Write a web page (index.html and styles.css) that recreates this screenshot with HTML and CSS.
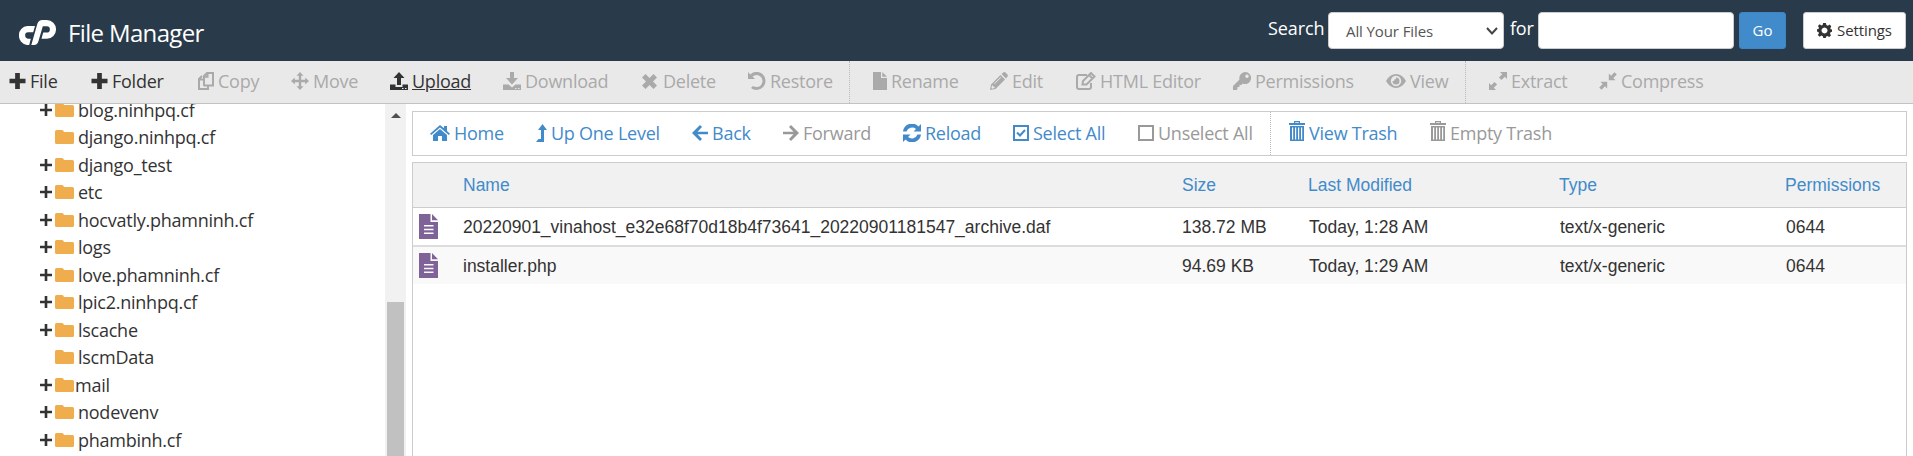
FILE: index.html
```html
<!DOCTYPE html>
<html lang="en">
<head>
<meta charset="utf-8">
<title>File Manager</title>
<link rel="stylesheet" href="styles.css">
</head>
<body>
<svg class="sprite" aria-hidden="true">
  <symbol id="plus" viewBox="0 0 17 17"><path d="M6 0h5v6h6v5h-6v6H6v-6H0V6h6z"/></symbol>
  <symbol id="plus-thin" viewBox="0 0 12 12"><path d="M4.700 0h2.600v4.700H12v2.600H7.300V12H4.700V7.300H0V4.700h4.700z"/></symbol>
  <symbol id="copy" viewBox="0 0 16 18"><path class="line" d="M10 14v3H1V7l3-3M6 14V4l3-3h6v12.500H6M6 4.800h3.500V1M1 7.500h4"/></symbol>
  <symbol id="move" viewBox="0 0 18 18"><path d="M9 0l3.500 3.800h-2.300v4h4V5.500L18 9l-3.800 3.500v-2.300h-4v4h2.300L9 18l-3.500-3.800h2.300v-4h-4v2.300L0 9l3.800-3.500v2.300h4v-4H5.500z"/></symbol>
  <symbol id="upload" viewBox="0 0 18 18"><path d="M9 0l5.500 6H11v7H7V6H3.500zM0 12.500h5.500V15h7v-2.500H18V18H0zm12 3.500v1h1.500v-1zm3 0v1h1.500v-1z" fill-rule="evenodd"/></symbol>
  <symbol id="download" viewBox="0 0 18 18"><path d="M7 0h4v6h4l-6 6.500L3 6h4zM0 12.500h5.500L9 15.500l3.500-3H18V18H0zm12 3.500v1h1.500v-1zm3 0v1h1.500v-1z" fill-rule="evenodd"/></symbol>
  <symbol id="times" viewBox="0 0 15 15"><path d="M3.500 0l4 4 4-4L15 3.500l-4 4 4 4-3.500 3.500-4-4-4 4L0 11.500l4-4-4-4z"/></symbol>
  <symbol id="undo" viewBox="0 0 18 18"><path d="M0 0l2.300 2.400A9 9 0 1 1 3 16l2-2.100A6 6 0 1 0 4.500 4.600L7 7H0z"/></symbol>
  <symbol id="file" viewBox="0 0 14 18"><path d="M0 0h8v6h6v12H0zM9.300 0L14 4.700H9.300z"/></symbol>
  <symbol id="pencil" viewBox="0 0 18 18"><path d="M0 18l1-5.500L10.500 3 15 7.500 5.500 17zM11.500 2L13.500.3q1-.6 2 .3l2 2q.8 1 0 2L16 6.500zM2 13.500l-.6 2.500.7.700 2.400-.6v-1.500H3v-1.200zM10.500 5L4 11.500l.6.600L11.100 5.600z" fill-rule="evenodd"/></symbol>
  <symbol id="compose" viewBox="0 0 20 18"><path class="line" d="M11 3H3Q1 3 1 5v10q0 2 2 2h10q2 0 2-2v-4M6.500 12.500l.5-3.500 8-8 3.500 3.500-8 8zM13 3l3.500 3.500"/></symbol>
  <symbol id="key" viewBox="0 0 18 18"><path d="M12 0a6 6 0 1 1-2.500 11.400L8.500 13H6.500v2h-2v2l-1 1H0v-4l6.500-6.500A6 6 0 0 1 12 0zm2 2.500a1.700 1.700 0 1 0 .01 0z" fill-rule="evenodd"/></symbol>
  <symbol id="eye" viewBox="0 0 20 14"><path d="M0 7Q4 0 10 0t10 7q-4 7-10 7T0 7zm10-5.200a5.200 5.200 0 1 0 .01 0zm0 1.700A3.500 3.500 0 1 1 6.500 7H8a2 2 0 0 1 2-2z" fill-rule="evenodd"/></symbol>
  <symbol id="expand" viewBox="0 0 18 18"><path d="M11 0h7v7l-2.200-2.200-3.300 3.300-2.600-2.600 3.300-3.300zM0 11l2.200 2.200 3.300-3.300 2.600 2.600-3.300 3.300L7 18H0z"/></symbol>
  <symbol id="compress" viewBox="0 0 18 18"><path d="M9.800 8.200V1.500L12 3.700 15.500.2l2.300 2.300L14.300 6l2.200 2.200zM8.200 9.800v6.700L6 14.300 2.500 17.800.2 15.500 3.700 12 1.500 9.800z"/></symbol>
  <symbol id="home" viewBox="0 0 20 16"><path d="M10 0l4 3.300V1h3v5l3 2.700-1.200 1.300L10 2.500 1.200 10 0 8.700zM10 4l7 6v6h-5v-5H8v5H3v-6z"/></symbol>
  <symbol id="levelup" viewBox="0 0 11 18"><path d="M6.500 0L11 6H8v12H0l2.500-3H5V6H2z"/></symbol>
  <symbol id="left" viewBox="0 0 16 16"><path d="M8 0l2 2-4.500 4.700H16v2.600H5.500L10 14l-2 2L0 8z"/></symbol>
  <symbol id="right" viewBox="0 0 16 16"><path d="M8 0L6 2l4.500 4.700H0v2.600h10.500L6 14l2 2 8-8z"/></symbol>
  <symbol id="refresh" viewBox="0 0 18 18"><path d="M0 7.500A9 9 0 0 1 15.500 2.500L18 0v7.500h-7.500L13 5A6 6 0 0 0 3.500 7.500zM18 10.500A9 9 0 0 1 2.500 15.500L0 18v-7.500h7.500L5 13a6 6 0 0 0 9.500-2.500z"/></symbol>
  <symbol id="check" viewBox="0 0 16 16"><path class="line" d="M1 1h14v14H1zM4 7.500l3 3L12 5"/></symbol>
  <symbol id="uncheck" viewBox="0 0 16 16"><path class="line" d="M1 1h14v14H1z"/></symbol>
  <symbol id="trash" viewBox="0 0 16 20"><path d="M5 2V0h6v2h5v2H0V2zm1.200 0h3.600v-.8H6.200zM1 5h14v15H1zm2 1.500v12h1.200v-12zm3 0v12h1.200v-12zm3 0v12h1.200v-12zm3 0v12h1.200v-12z" fill-rule="evenodd"/></symbol>
  <symbol id="folder" viewBox="0 0 19 14"><path d="M1.500 0H7q1.500 0 2 2h8.500Q19 2 19 3.500v9q0 1.500-1.500 1.500h-16Q0 14 0 12.500v-11Q0 0 1.500 0z"/></symbol>
  <symbol id="doc" viewBox="0 0 19 25"><path d="M0 0h11.500v8H19v17H0zM13 0l6 6.200h-6zM5 11v1.500h9.500V11zm0 3.800v1.500h9.500v-1.500zm0 3.700V20h9.500v-1.500z" fill-rule="evenodd"/></symbol>
  <symbol id="gear" viewBox="0 0 16 16"><path d="M6.500 0h3l.5 2.200 1.500.7 2-1.200 1.700 1.800-1 2 .4 1.200 1.400.3v2.400l-1.600.5-.5 1.300 1 2-1.900 1.700-1.900-1.100-1.300.5L9.300 16H6.700l-.5-2-1.500-.6-2 1.200L.9 12.700l1.200-1.900-.6-1.300L0 9V6.700l1.600-.4.500-1.200L1 3.200l1.800-1.800 1.900 1.200L6 2zM8 4.800a3.200 3.200 0 1 0 .01 0z" fill-rule="evenodd"/></symbol>
</svg>

<header class="masthead">
  <svg class="logo" viewBox="0 0 37 25"><path d="M16 6l-1.800 6.300H9a3 3 0 0 0-2.800 3.300Q6.300 18.500 9 18.700h2.800L10.200 25H8A9 9 0 0 1 0 15.500 9 9 0 0 1 8.500 6zM18.300 4Q19.500 0 23.500 0h4.300A9.200 9.200 0 0 1 37 9.300a9.200 9.200 0 0 1-9.200 9.500h-5.300l1.700-6.300h3.600a3 3 0 0 0 0-6.200h-4L19.500 21q-1 4-4.500 4h-2.700z"/></svg>
  <h1 class="title">File Manager</h1>
  <form class="search">
    <label class="search-label">Search</label>
    <div class="select"><span>All Your Files</span><svg class="chevron" viewBox="0 0 12 8"><path d="M1 1l5 5.500L11 1"/></svg></div>
    <label class="for-label">for</label>
    <input class="query" type="text">
    <button class="go" type="button">Go</button>
    <button class="settings" type="button"><svg class="i15"><use href="#gear"/></svg>Settings</button>
  </form>
</header>

<nav class="toolbar">
  <a><svg class="i17"><use href="#plus"/></svg>File</a>
  <a><svg class="i17"><use href="#plus"/></svg>Folder</a>
  <a class="off"><svg class="i16t"><use href="#copy"/></svg>Copy</a>
  <a class="off"><svg class="i18"><use href="#move"/></svg>Move</a>
  <a class="hover"><svg class="i18"><use href="#upload"/></svg>Upload</a>
  <a class="off"><svg class="i18"><use href="#download"/></svg>Download</a>
  <a class="off"><svg class="i15 wide"><use href="#times"/></svg>Delete</a>
  <a class="off"><svg class="i18"><use href="#undo"/></svg>Restore</a>
  <a class="off divided"><svg class="i14"><use href="#file"/></svg>Rename</a>
  <a class="off"><svg class="i18"><use href="#pencil"/></svg>Edit</a>
  <a class="off"><svg class="i20"><use href="#compose"/></svg>HTML Editor</a>
  <a class="off"><svg class="i18"><use href="#key"/></svg>Permissions</a>
  <a class="off"><svg class="i20"><use href="#eye"/></svg>View</a>
  <a class="off divided"><svg class="i18"><use href="#expand"/></svg>Extract</a>
  <a class="off"><svg class="i18"><use href="#compress"/></svg>Compress</a>
</nav>

<div class="workspace">
  <aside class="sidebar">
    <ul class="tree">
      <li><b><svg><use href="#plus-thin"/></svg></b><svg class="folder"><use href="#folder"/></svg>blog.ninhpq.cf</li>
      <li><b></b><svg class="folder"><use href="#folder"/></svg>django.ninhpq.cf</li>
      <li><b><svg><use href="#plus-thin"/></svg></b><svg class="folder"><use href="#folder"/></svg>django_test</li>
      <li><b><svg><use href="#plus-thin"/></svg></b><svg class="folder"><use href="#folder"/></svg>etc</li>
      <li><b><svg><use href="#plus-thin"/></svg></b><svg class="folder"><use href="#folder"/></svg>hocvatly.phamninh.cf</li>
      <li><b><svg><use href="#plus-thin"/></svg></b><svg class="folder"><use href="#folder"/></svg>logs</li>
      <li><b><svg><use href="#plus-thin"/></svg></b><svg class="folder"><use href="#folder"/></svg>love.phamninh.cf</li>
      <li><b><svg><use href="#plus-thin"/></svg></b><svg class="folder"><use href="#folder"/></svg>lpic2.ninhpq.cf</li>
      <li><b><svg><use href="#plus-thin"/></svg></b><svg class="folder"><use href="#folder"/></svg>lscache</li>
      <li><b></b><svg class="folder"><use href="#folder"/></svg>lscmData</li>
      <li class="tight"><b><svg><use href="#plus-thin"/></svg></b><svg class="folder"><use href="#folder"/></svg>mail</li>
      <li><b><svg><use href="#plus-thin"/></svg></b><svg class="folder"><use href="#folder"/></svg>nodevenv</li>
      <li><b><svg><use href="#plus-thin"/></svg></b><svg class="folder"><use href="#folder"/></svg>phambinh.cf</li>
    </ul>
    <div class="scrollbar"><span class="arrow"></span><span class="thumb"></span></div>
  </aside>
  <main class="content">
    <nav class="actions">
      <a><svg class="i20"><use href="#home"/></svg>Home</a>
      <a><svg class="i11"><use href="#levelup"/></svg>Up One Level</a>
      <a><svg class="i16"><use href="#left"/></svg>Back</a>
      <a class="off"><svg class="i16"><use href="#right"/></svg>Forward</a>
      <a><svg class="i18"><use href="#refresh"/></svg>Reload</a>
      <a><svg class="i16"><use href="#check"/></svg>Select All</a>
      <a class="off"><svg class="i16"><use href="#uncheck"/></svg>Unselect All</a>
      <a class="divided"><svg class="trash"><use href="#trash"/></svg>View Trash</a>
      <a class="off"><svg class="trash"><use href="#trash"/></svg>Empty Trash</a>
    </nav>
    <section class="listing">
      <div class="row head"><span></span><span>Name</span><span>Size</span><span>Last Modified</span><span>Type</span><span>Permissions</span></div>
      <div class="row"><svg class="doc"><use href="#doc"/></svg><span>20220901_vinahost_e32e68f70d18b4f73641_20220901181547_archive.daf</span><span>138.72 MB</span><span>Today, 1:28 AM</span><span>text/x-generic</span><span>0644</span></div>
      <div class="row alt"><svg class="doc"><use href="#doc"/></svg><span>installer.php</span><span>94.69 KB</span><span>Today, 1:29 AM</span><span>text/x-generic</span><span>0644</span></div>
    </section>
  </main>
</div>
</body>
</html>
```
FILE: styles.css
```css
* { box-sizing: border-box; }
body {
  margin: 0;
  height: 456px;
  overflow: hidden;
  display: flex;
  flex-direction: column;
  background: #fff;
  color: #333;
  font: 18px/26px "Open Sans", sans-serif;
  letter-spacing: -0.25px;
}
svg { fill: currentColor; flex: none; }
.sprite { position: absolute; width: 0; height: 0; }
.line { fill: none; stroke: currentColor; stroke-width: 2; }

/* Header */
.masthead {
  height: 61px;
  flex: none;
  display: flex;
  align-items: flex-start;
  padding: 12px 7px 0 19px;
  background: #293a4a;
  color: #fff;
}
.logo { width: 37px; height: 25px; margin-top: 8px; }
.title { margin: 5px 0 0 12px; font-size: 24px; line-height: 32px; font-weight: 400; letter-spacing: -0.65px; }
.search { display: flex; margin-left: auto; }
.search-label { width: 60px; margin-top: 3px; letter-spacing: -0.1px; }
.for-label { width: 34px; padding-left: 6px; margin-top: 3px; }
.select {
  width: 176px;
  height: 37px;
  display: flex;
  align-items: center;
  justify-content: space-between;
  padding: 1px 5px 0 17px;
  border: 1px solid #ccc;
  border-radius: 4px;
  background: #fff;
  color: #555;
  font-size: 15px;
  letter-spacing: -0.1px;
}
.chevron { width: 12px; height: 8px; fill: none; stroke: #444; stroke-width: 2; }
.query { width: 196px; height: 37px; border: 1px solid #ccc; border-radius: 4px; background: #fff; }
.go, .settings { height: 37px; padding: 0 0 1px; border-radius: 3px; font: 15px/20px "Open Sans", sans-serif; }
.go { width: 47px; margin-left: 5px; border: 1px solid #3d85c6; background: #428bca; color: #fff; }
.settings {
  width: 103px;
  margin-left: 17px;
  display: flex;
  align-items: center;
  justify-content: center;
  gap: 5px;
  border: 1px solid #ccc;
  background: #fff;
  color: #333;
  letter-spacing: -0.1px;
}
.i11 { width: 11px; height: 18px; }
.i14 { width: 14px; height: 18px; }
.i15 { width: 15px; height: 15px; }
.i15.wide { margin-right: 2px; }
.i16 { width: 16px; height: 16px; }
.i16t { width: 16px; height: 18px; }
.i17 { width: 17px; height: 16px; }
.i18 { width: 18px; height: 18px; }
.i20 { width: 20px; height: 18px; }

/* Main toolbar */
.toolbar {
  height: 43px;
  flex: none;
  display: grid;
  grid-template-columns: 82px 107px 93px 99px 113px 139px 106px 101px 141px 86px 157px 153px 79px 134px 120px;
  padding-left: 9px;
  border-bottom: 1px solid #c3c3c6;
  background: #e9e9e9;
}
.toolbar a, .actions a { display: flex; align-items: center; gap: 4px; padding-bottom: 2px; white-space: nowrap; }
.toolbar .off { color: #aaa; }
.toolbar .hover { text-decoration: underline; }
.toolbar .divided { border-left: 1px dotted #bbb; padding-left: 23px; }

/* Folder tree */
.workspace { flex: 1; min-height: 0; display: flex; }
.sidebar { width: 406px; flex: none; display: flex; overflow: hidden; }
.tree { flex: 1; list-style: none; margin: -8px 0 0; padding: 0 0 0 40px; }
.tree li { height: 27.5px; display: flex; align-items: center; }
.tree b { width: 15px; display: flex; }
.tree b svg { width: 12px; height: 12px; }
.folder { width: 19px; height: 14px; margin-right: 4px; color: #f0ad4e; }
.tight .folder { margin-right: 1px; }
.scrollbar { width: 21px; display: flex; flex-direction: column; align-items: center; background: #f1f1f1; }
.arrow { margin-top: 9px; border: 5px solid transparent; border-top: 0; border-bottom-color: #505050; }
.thumb { width: 17px; height: 160px; margin-top: 184px; background: #c1c1c1; }

/* File listing */
.content { flex: 1; display: flex; flex-direction: column; gap: 6px; padding: 7px 6px 0 6px; }
.actions {
  height: 45px;
  flex: none;
  display: grid;
  grid-template-columns: 106px 156px 91px 120px 110px 125px 132px 160px 130px;
  padding-left: 17px;
  border: 1px solid #ccc;
  color: #428bca;
}
.actions a { padding-bottom: 1px; }
.actions .off { color: #999; }
.actions .divided { border-left: 1px dotted #bbb; padding-left: 18px; }
.trash { width: 16px; height: 20px; margin-top: -5px; }
.listing { flex: 1; border: 1px solid #ccc; border-bottom: 0; font: 17.5px/24px "Liberation Sans", Arial, sans-serif; letter-spacing: 0; }
.row {
  height: 39px;
  display: grid;
  grid-template-columns: 44px 719px 127px 251px 226px 1fr;
  align-items: center;
  padding-left: 6px;
  border-bottom: 2px solid #ddd;
}
.row.head { height: 45px; padding-bottom: 1px; border-bottom: 1px solid #ccc; background: #f1f1f1; color: #428bca; }
.row.head span:nth-child(n+4) { margin-left: -1px; }
.row.alt { height: 37px; border: 0; background: #f9f9f9; }
.doc { width: 19px; height: 25px; color: #7f6298; }
```
